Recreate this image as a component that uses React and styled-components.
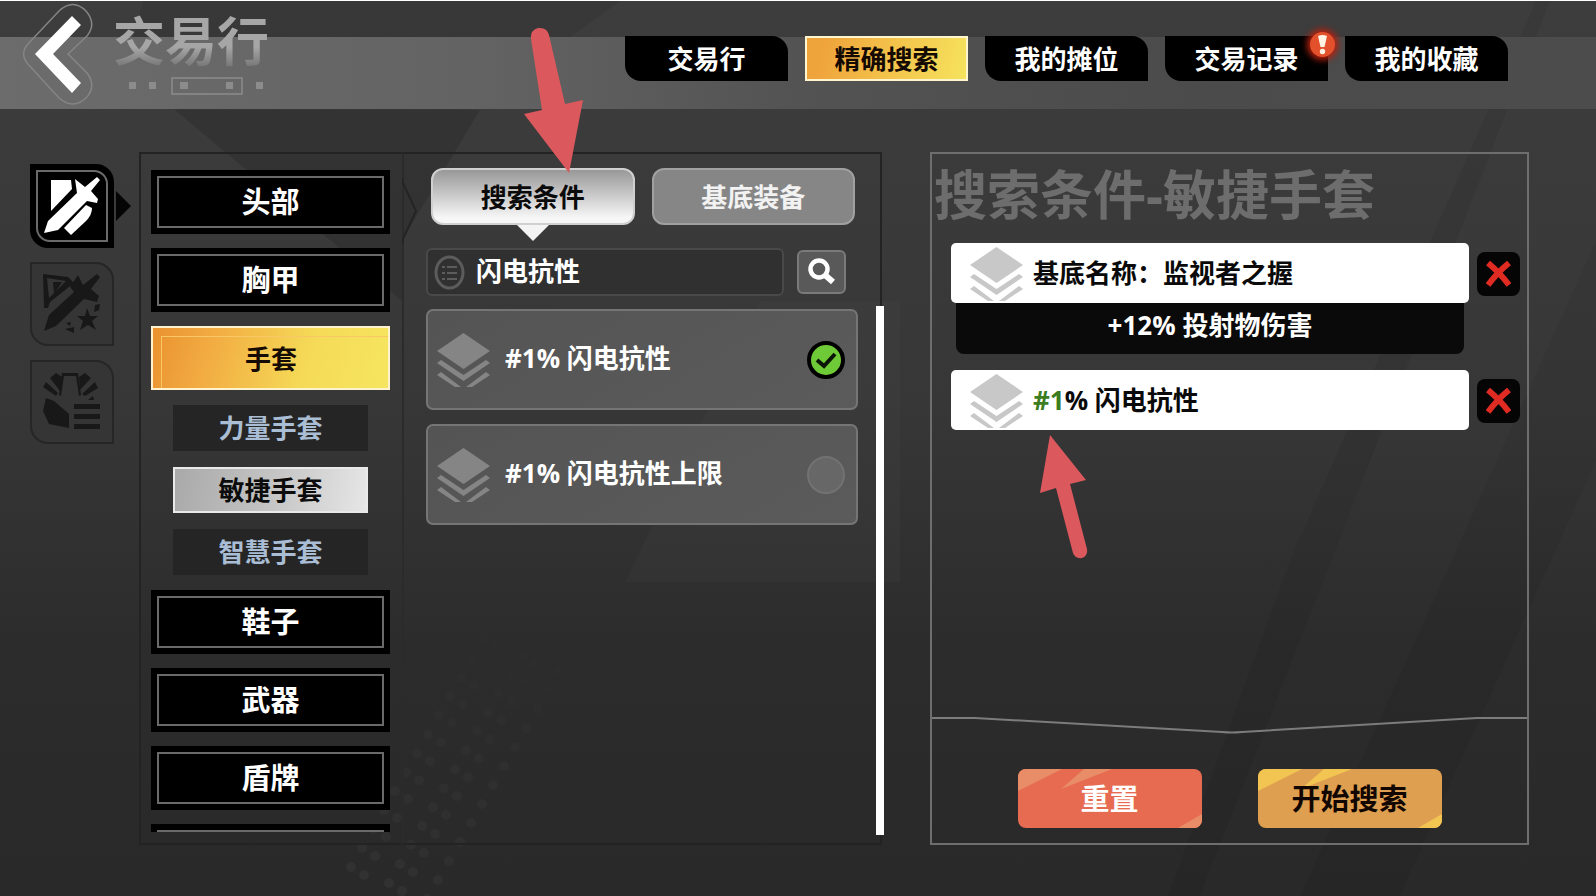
import React, { useState } from "react";
import styled, { createGlobalStyle, css } from "styled-components";

const GlobalStyle = createGlobalStyle`
  *, *::before, *::after { box-sizing: border-box; }
  body {
    margin: 0;
    background: #2c2c2c;
    color: #fff;
    font-family: "Open Sans", "Noto Sans CJK SC", sans-serif;
    font-size: 26px;
    font-weight: 700;
    line-height: 32px;
  }
  button, input { font: inherit; color: inherit; }
  button { border: 0; padding: 0; cursor: pointer; }
  h1, h2, p { margin: 0; }
`;

const Page = styled.div`
  position: relative;
  isolation: isolate;
  display: flex;
  flex-direction: column;
  height: 100vh;
  min-height: 720px;
  min-width: 1360px;
  overflow: hidden;
  background: linear-gradient(#3d3d3d, #373737 45%, #2c2c2c 72%, #292929);
  border-top: 1px solid #fff;
`;

const Backdrop = styled.svg`
  position: absolute;
  inset: 0;
  width: 100%;
  height: 100%;
  z-index: -1;
`;

/* ---------- header ---------- */

const Header = styled.header`
  display: flex;
  align-items: flex-start;
  height: 108px;
  padding: 0 88px 0 22px;
  background: linear-gradient(90deg, #6c6c6c, #636363 30%, #535353 50%, #4b4b4b 75%, #4c4c4c)
    0 36px / 100% 72px no-repeat;
`;

const BackButton = styled.button`
  width: 72px;
  height: 108px;
  background: none;
  svg { display: block; }
`;

const Brand = styled.div`
  display: flex;
  flex-direction: column;
  padding: 10px 0 0 19px;
`;

const BrandTitle = styled.h1`
  font-size: 52px;
  line-height: 60px;
  color: transparent;
  background: linear-gradient(#a6a6a6 60%, #747474 95%);
  background-clip: text;
`;

const BrandMarks = styled.svg`
  margin: 6px 0 0 16px;
`;

const Nav = styled.nav`
  display: flex;
  gap: 17px;
  margin: 35px 0 0 auto;
`;

const NavTab = styled.button`
  position: relative;
  width: 163px;
  height: 45px;
  background: #000;
  border-radius: 0 16px 0 16px;
  ${(p) =>
    p.$active &&
    css`
      color: #140a02;
      background: linear-gradient(105deg, #efa33b 10%, #f3c14a 50%, #f6e35d);
      border: 2px solid #fff6d0;
      border-radius: 0;
    `}
`;

const Alert = styled.span`
  position: absolute;
  top: -4px;
  right: -7px;
  display: grid;
  place-items: center;
  width: 25px;
  height: 25px;
  border-radius: 50%;
  background: #e2512c;
  box-shadow: 0 0 6px 3px #b5200f;
`;

/* ---------- body ---------- */

const Body = styled.main`
  flex: 1;
  min-height: 0;
  display: grid;
  grid-template-columns: 84px 288px minmax(0, 480fr) minmax(0, 647fr);
  padding: 43px 67px 51px 30px;
`;

const Rail = styled.nav`
  display: flex;
  flex-direction: column;
  gap: 14px;
  padding-top: 12px;
`;

const RailButton = styled.button`
  position: relative;
  width: 84px;
  height: 84px;
  padding: 6px;
  color: #181818;
  background: #353535;
  border: 2px solid #262626;
  border-radius: 0 18px 0 18px;
  svg { position: absolute; left: -2px; top: -2px; }
  ${(p) =>
    p.$active &&
    css`
      color: #fff;
      background: #000;
      border-color: #000;
      &::before {
        content: "";
        position: absolute;
        inset: 4px;
        border: 2px solid #6a6a6a;
        border-radius: 0 14px 0 14px;
      }
      &::after {
        content: "";
        position: absolute;
        left: 84px;
        top: 25px;
        border: 15px solid transparent;
        border-left-color: #050505;
        border-right-width: 0;
      }
    `}
`;

const Categories = styled.aside`
  display: flex;
  min-height: 0;
  margin-left: 25px;
  padding: 16px 12px 11px 10px;
  border: 2px solid #232323;
  border-right: 0;
`;

const CategoryList = styled.div`
  flex: 1;
  display: flex;
  flex-direction: column;
  gap: 14px;
  overflow: hidden;
`;

const CategoryButton = styled.button`
  flex: none;
  height: 64px;
  padding: 6px;
  background: #000;
  font-size: 29px;
  span {
    display: grid;
    place-items: center;
    height: 100%;
    border: 2px solid #6a6a6a;
  }
  ${(p) =>
    p.$active &&
    css`
      color: #160b02;
      font-size: 26px;
      padding: 8px 0 0 8px;
      background: linear-gradient(105deg, #ea922f, #f2ac42 25%, #f5da57 65%, #f6e560);
      border: 2px solid #fff3cf;
      span {
        border: 1px solid #f9c765;
        border-right: 0;
        border-bottom: 0;
        padding: 0 8px 8px 0;
      }
    `}
`;

const SubList = styled.div`
  flex: none;
  display: flex;
  flex-direction: column;
  gap: 16px;
  padding: 1px 22px;
`;

const SubButton = styled.button`
  height: 46px;
  color: #a9bdd4;
  background: #252525;
  ${(p) =>
    p.$active &&
    css`
      color: #0c0c0c;
      background: linear-gradient(100deg, #a9a9a9, #c4c4c4 50%, #e6e6e6);
      border: 2px solid #e9e9e9;
    `}
`;

const Finder = styled.section`
  position: relative;
  display: flex;
  flex-direction: column;
  min-height: 0;
  padding: 14px 0 8px 22px;
  border: 2px solid #232323;
  border-left-color: #2b2b2b;
`;

const Notch = styled.svg`
  position: absolute;
  left: -2px;
  top: 24px;
`;

const FinderTabs = styled.div`
  display: flex;
  gap: 17px;
  padding: 0 25px 0 5px;
`;

const FinderTab = styled.button`
  position: relative;
  flex: 1;
  height: 57px;
  border: 2px solid #a0a0a0;
  border-radius: 12px;
  color: #f2f2f2;
  background: #868686;
  ${(p) =>
    p.$active &&
    css`
      color: #0a0a0a;
      border-color: #d0d0d0;
      background: linear-gradient(#989898, #f6f6f6 90%);
      &::after {
        content: "";
        position: absolute;
        left: 50%;
        top: 55px;
        margin-left: -16px;
        border: 16px solid transparent;
        border-top-color: #f4f4f4;
        border-bottom-width: 0;
      }
    `}
`;

const SearchBar = styled.form`
  display: flex;
  align-items: center;
  gap: 13px;
  padding: 23px 34px 0 0;
`;

const SearchField = styled.label`
  flex: 1;
  min-width: 0;
  display: flex;
  align-items: center;
  gap: 11px;
  height: 48px;
  padding: 0 6px;
  background: #303030;
  border: 2px solid #494949;
  border-radius: 6px;
  svg { flex: none; }
`;

const SearchInput = styled.input`
  flex: 1;
  min-width: 0;
  height: 40px;
  padding: 0 0 4px;
  border: 0;
  outline: 0;
  background: none;
  color: #fff;
`;

const SearchButton = styled.button`
  display: grid;
  place-items: center;
  width: 49px;
  height: 44px;
  background: #595959;
  border: 2px solid #7a7a7a;
  border-radius: 6px;
`;

const ResultArea = styled.div`
  flex: 1;
  min-height: 0;
  display: flex;
  justify-content: space-between;
  margin-right: -4px;
  padding-top: 10px;
`;

const Results = styled.div`
  flex: 1;
  display: flex;
  flex-direction: column;
  gap: 14px;
  margin-right: 18px;
  padding-top: 3px;
`;

const ScrollTrack = styled.div`
  width: 8px;
  background: #fff;
`;

const Result = styled.label`
  display: flex;
  align-items: center;
  height: 101px;
  padding: 0 11px 0 9px;
  background: linear-gradient(150deg, #545454, #5b5b5b);
  border: 2px solid #757575;
  border-radius: 7px;
  cursor: pointer;
`;

const ResultName = styled.span`
  flex: 1;
  padding: 0 0 4px 15px;
`;

const Tick = styled.span`
  display: grid;
  width: 38px;
  height: 38px;
  input, svg { grid-area: 1 / 1; }
  svg { pointer-events: none; }
  input {
    appearance: none;
    width: 38px;
    height: 38px;
    margin: 0;
    border-radius: 50%;
    border: 2px solid #727272;
    background: #676767;
  }
  input:checked {
    border: 4px solid #000;
    background: #6fca37;
  }
`;

const Summary = styled.section`
  display: flex;
  flex-direction: column;
  min-height: 0;
  margin-left: 48px;
  border: 2px solid #6e6e6e;
`;

const SummaryTitle = styled.h2`
  padding: 9px 0 1px 2px;
  font-size: 53px;
  line-height: 64px;
  color: #6d6d6d;
  white-space: nowrap;
`;

const Terms = styled.div`
  flex: 1;
  display: flex;
  flex-direction: column;
  gap: 16px;
  padding: 15px 7px 0 19px;
`;

const Term = styled.div`
  position: relative;
  display: flex;
  gap: 8px;
`;

const TermMain = styled.div`
  flex: 1;
`;

const TermCard = styled.div`
  display: flex;
  align-items: center;
  gap: 10px;
  height: 60px;
  padding: 0 19px;
  background: #fff;
  color: #0a0a0a;
  border-radius: 5px;
  overflow: hidden;
  svg { margin-top: 2px; }
  em { font-style: normal; color: #3b7d1f; }
`;

const TermDetail = styled.p`
  height: 51px;
  margin: 0 5px;
  padding-top: 6px;
  text-align: center;
  background: #0a0a0a;
  border-radius: 0 0 8px 8px;
`;

const RemoveButton = styled.button`
  display: grid;
  place-items: center;
  width: 43px;
  height: 44px;
  margin-top: 9px;
  background: #050505;
  border-radius: 8px;
`;

const Divider = styled.svg`
  display: block;
  width: 100%;
  height: 20px;
`;

const Actions = styled.div`
  display: flex;
  justify-content: center;
  gap: 56px;
  padding: 33px 0 15px;
`;

const ActionButton = styled.button`
  position: relative;
  isolation: isolate;
  width: 184px;
  height: 59px;
  border-radius: 8px;
  overflow: hidden;
  font-size: 29px;
  color: ${(p) => (p.$primary ? "#120700" : "#fff")};
  background: ${(p) => (p.$primary ? "#df9f50" : "#e66b50")};
  svg {
    position: absolute;
    inset: 0;
    z-index: -1;
    fill: ${(p) => (p.$primary ? "#f2c553" : "#e98d69")};
  }
`;

const Pointer = styled.svg`
  position: absolute;
  left: ${(p) => p.$left}px;
  top: ${(p) => p.$top}px;
  z-index: 2;
  pointer-events: none;
`;

/* ---------- drawings ---------- */

const dots = [];
for (let row = 0; row < 14; row++) {
  for (let col = 0; col < 5; col++) {
    dots.push({
      x: 494 - row * 11 + col * 19 - (col % 2) * 6,
      y: 640 + row * 19 + col * 8 - 20,
      o: 0.004 + row * 0.0026,
    });
  }
}

function Scenery() {
  return (
    <Backdrop viewBox="0 0 1596 896" preserveAspectRatio="none" aria-hidden="true">
      <path d="M143 0H620L470 109H175L133 37Z" fill="#000" opacity=".08" />
      <path d="M175 109H480L402 240V300Z" fill="#000" opacity=".12" />
      <path d="M760 300H900V582H625Z" fill="#fff" opacity=".02" />
      <path d="M1536 0H1550L1300 640L1200 896H1168L1290 560Z" fill="#000" opacity=".06" />
      <path d="M1596 240V460L1400 896H1300Z" fill="#000" opacity=".05" />
      {dots.map((d, i) => (
        <circle key={i} cx={d.x} cy={d.y} r="5" fill="#fff" opacity={d.o} />
      ))}
    </Backdrop>
  );
}

const BackIcon = () => (
  <svg width="72" height="108" viewBox="22 1 72 108" aria-hidden="true">
    <path
      d="M27 45L59 11Q73 -2 86 11Q97 24 87 36L68 54L87 73Q97 86 86 98Q73 110 59 98L27 63Q20 54 27 45Z"
      fill="none" stroke="#858585" strokeWidth="1.5"
    />
    <path d="M35 54L72 16L81 25L53 54L81 83L72 93Z" fill="#fff" />
  </svg>
);

const Layers = ({ color }) => (
  <svg width="53" height="54" viewBox="0 0 53 54" fill={color} aria-hidden="true">
    <path d="M26.500 0L53 18L26.500 36L0 18Z" />
    <path d="M0 30L4 27L26.500 42L49 27L53 30L26.500 48Z" />
    <path d="M0 42L4 39L24 54H18Z M53 42L49 39L29 54H35Z" />
  </svg>
);

const ShieldSword = () => (
  <svg width="84" height="84" viewBox="0 0 84 84" fill="currentColor" aria-hidden="true">
    <path d="M21 16H41L42 25L21 47Z" />
    <path d="M14 69L18 57L47 29L45 15L55 23L67 13L70 16L61 27L68 35L67 39L57 37L28 66Z" />
    <path d="M56 41L62 44Q62 51 56 57L41 71L34 64Z" />
  </svg>
);

const ShieldStar = () => (
  <svg width="84" height="84" viewBox="0 0 84 84" fill="currentColor" aria-hidden="true">
    <path fillRule="evenodd" d="M13 12L38 15L44 21L20 40L18 46H14ZM17 16L19 36L36 19Z" />
    <path d="M23 20L32 20L24 32Z" />
    <path d="M48 13L53 23L67 12L70 15L61 27L69 34L67 40L54 37L26 64L14 69L19 53L44 30L40 25Z" />
    <path d="M57 46L60 54L68 54L62 59L66 68L58 63L50 68L53 59L47 54L55 54Z" />
    <path d="M65 43L70 42L69 48L64 50ZM36 61L41 60L40 64ZM35 67L44 65L44 71Z" />
  </svg>
);

const GloveList = () => (
  <svg width="84" height="84" viewBox="0 0 84 84" fill="currentColor" aria-hidden="true">
    <path d="M32 13H48L51 35L49 36L46 16H34L31 36L29 35Z" />
    <path d="M20 18L26 13L32 17L30 31ZM16 22L28 33L26 36L13 27ZM50 30L49 17L55 13L61 18ZM52 34L65 22L68 28L55 36ZM58 40L63 36L64 40Z" />
    <path d="M16 38L24 41L39 54V68L19 64L13 51Z" />
    <path d="M44 44H70V49H44ZM44 54H70V59H44ZM44 64H70V69H44Z" />
  </svg>
);

const ListIcon = () => (
  <svg width="31" height="35" viewBox="0 0 31 35" fill="none" stroke="#5c5c5c" aria-hidden="true">
    <ellipse cx="15.500" cy="17.500" rx="13.500" ry="15.500" strokeWidth="3" />
    <path d="M8 12H11M13 12H23M8 18H11M13 18H23M8 24H11M13 24H23" strokeWidth="2" />
  </svg>
);

const SearchIcon = () => (
  <svg width="29" height="28" viewBox="0 0 29 28" fill="none" stroke="#fff" aria-hidden="true">
    <circle cx="12" cy="11" r="8.500" strokeWidth="4.500" />
    <path d="M18 17L26 24" strokeWidth="6" />
  </svg>
);

const CrossIcon = () => (
  <svg width="25" height="26" viewBox="0 0 25 26" fill="none" stroke="#e02b23" strokeWidth="6" aria-hidden="true">
    <path d="M2 2Q14 12 23 24M23 2Q12 11 2 24" />
  </svg>
);

const Shine = () => (
  <svg width="184" height="59" viewBox="0 0 184 59" aria-hidden="true">
    <path d="M0 0H44L0 22ZM66 0H94L43 20ZM184 45V59H160Z" />
  </svg>
);

const MAIN_TABS = ["交易行", "精确搜索", "我的摊位", "交易记录", "我的收藏"];
const RAIL = [
  ["装备", ShieldSword],
  ["传奇装备", ShieldStar],
  ["物品清单", GloveList],
];
const CATEGORIES = ["头部", "胸甲", "手套", "鞋子", "武器", "盾牌", ""];
const GLOVES = ["力量手套", "敏捷手套", "智慧手套"];

export default function App() {
  const [tab, setTab] = useState("精确搜索");
  const [rail, setRail] = useState(0);
  const [category, setCategory] = useState("手套");
  const [glove, setGlove] = useState("敏捷手套");
  const [finder, setFinder] = useState("搜索条件");

  return (
    <>
      <GlobalStyle />
      <Page>
        <Scenery />
        <Header>
          <BackButton aria-label="返回"><BackIcon /></BackButton>
          <Brand>
            <BrandTitle>交易行</BrandTitle>
            <BrandMarks width="135" height="18" viewBox="0 0 135 18" fill="#8c8c8c" aria-hidden="true">
              <path d="M0 5h7v7h-7zM20 5h7v7h-7zM51 5h8v7h-8zM97 5h7v7h-7zM127 5h7v7h-7z" />
              <path d="M43 1H113V17H43Z" fill="none" stroke="#8c8c8c" strokeWidth="1.500" />
            </BrandMarks>
          </Brand>
          <Nav aria-label="主导航">
            {MAIN_TABS.map((name) => (
              <NavTab key={name} $active={tab === name} onClick={() => setTab(name)}>
                {name}
                {name === "交易记录" && (
                  <Alert>
                    <svg width="9" height="20" viewBox="0 0 9 20" fill="#fff3e4" aria-hidden="true">
                      <path d="M0 1Q4.500 -1 9 1L6.500 12H2.500Z" />
                      <circle cx="4.500" cy="16.500" r="2.700" />
                    </svg>
                  </Alert>
                )}
              </NavTab>
            ))}
          </Nav>
        </Header>

        <Body>
          <Rail aria-label="物品类型">
            {RAIL.map(([name, Icon], i) => (
              <RailButton key={name} aria-label={name} $active={rail === i} onClick={() => setRail(i)}>
                <Icon />
              </RailButton>
            ))}
          </Rail>

          <Categories>
            <CategoryList>
              {CATEGORIES.map((name, i) => (
                <React.Fragment key={i}>
                  <CategoryButton
                    $active={category === name}
                    aria-label={name || "更多"}
                    onClick={() => setCategory(name)}
                  >
                    <span>{name}</span>
                  </CategoryButton>
                  {name === "手套" && (
                    <SubList>
                      {GLOVES.map((g) => (
                        <SubButton key={g} $active={glove === g} onClick={() => setGlove(g)}>{g}</SubButton>
                      ))}
                    </SubList>
                  )}
                </React.Fragment>
              ))}
            </CategoryList>
          </Categories>

          <Finder>
            <Notch width="16" height="66" viewBox="0 0 16 66" fill="none" aria-hidden="true">
              <path d="M1 0V5L14 33L1 61V66" stroke="#242424" strokeWidth="2" />
            </Notch>
            <FinderTabs>
              {["搜索条件", "基底装备"].map((name) => (
                <FinderTab key={name} $active={finder === name} onClick={() => setFinder(name)}>
                  {name}
                  {name === "搜索条件" && (
                    <Pointer $left={91} $top={-143} width="60" height="146" viewBox="0 0 60 146" fill="#db585d" aria-hidden="true">
                      <path d="M7 12Q6 3 14 1Q23 0 25 8L41 77L59 73L45 146L0 87L18 83Z" />
                    </Pointer>
                  )}
                </FinderTab>
              ))}
            </FinderTabs>
            <SearchBar onSubmit={(e) => e.preventDefault()}>
              <SearchField>
                <ListIcon />
                <SearchInput aria-label="搜索词缀" defaultValue="闪电抗性" />
              </SearchField>
              <SearchButton aria-label="搜索"><SearchIcon /></SearchButton>
            </SearchBar>
            <ResultArea>
              <Results>
                {["#1% 闪电抗性", "#1% 闪电抗性上限"].map((name, i) => (
                  <Result key={name}>
                    <Layers color="#858585" />
                    <ResultName>{name}</ResultName>
                    <Tick>
                      <input type="checkbox" defaultChecked={i === 0} />
                      {i === 0 && (
                        <svg width="38" height="38" viewBox="0 0 38 38" fill="none" aria-hidden="true">
                          <path d="M10 19L17 25L28 13" stroke="#0c1607" strokeWidth="4" />
                        </svg>
                      )}
                    </Tick>
                  </Result>
                ))}
              </Results>
              <ScrollTrack />
            </ResultArea>
          </Finder>

          <Summary>
            <SummaryTitle>搜索条件-敏捷手套</SummaryTitle>
            <Terms>
              <Term>
                <TermMain>
                  <TermCard>
                    <Layers color="#c8c8c8" />
                    <span>基底名称：监视者之握</span>
                  </TermCard>
                  <TermDetail>+12% 投射物伤害</TermDetail>
                </TermMain>
                <RemoveButton aria-label="移除基底名称"><CrossIcon /></RemoveButton>
              </Term>
              <Term>
                <TermMain>
                  <TermCard>
                    <Layers color="#c8c8c8" />
                    <span><em>#1</em>% 闪电抗性</span>
                  </TermCard>
                </TermMain>
                <RemoveButton aria-label="移除闪电抗性"><CrossIcon /></RemoveButton>
                <Pointer $left={89} $top={65} width="48" height="124" viewBox="0 0 48 124" fill="#db585d" aria-hidden="true">
                  <path d="M10 0L46 45L30 49L47 114Q48 121 42 123Q35 124 33 118L16 53L0 58Z" />
                </Pointer>
              </Term>
            </Terms>
            <Divider viewBox="0 0 595 20" preserveAspectRatio="none" aria-hidden="true">
              <path d="M0 2H43L290 16Q300 17 310 16L545 2H595" fill="none" stroke="#7c7c7c" strokeWidth="2" />
            </Divider>
            <Actions>
              <ActionButton><Shine />重置</ActionButton>
              <ActionButton $primary><Shine />开始搜索</ActionButton>
            </Actions>
          </Summary>
        </Body>
      </Page>
    </>
  );
}
